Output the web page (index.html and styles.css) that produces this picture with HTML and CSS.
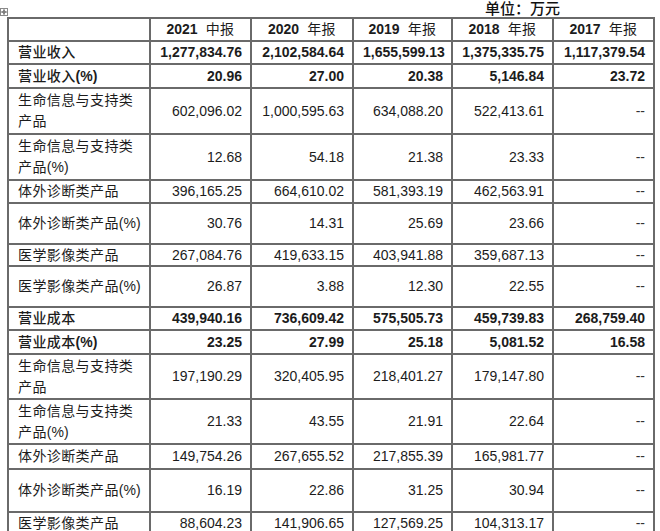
FILE: index.html
```html
<!DOCTYPE html>
<html lang="zh">
<head>
<meta charset="utf-8">
<title>营业收入与营业成本</title>
<link rel="stylesheet" href="styles.css">
</head>
<body>
<div class="page">
  <div class="caption">
    <svg class="handle" width="8" height="8" viewBox="0 0 8 8" aria-hidden="true">
      <rect x="0.5" y="0.5" width="7" height="7" fill="#fff" stroke="#8a8a8a"/>
      <path d="M4 1.5V6.5M1.5 4H6.5" stroke="#555" stroke-width="1"/>
      <path d="M4 1.2L3 2.4H5Z M4 6.8L3 5.6H5Z M1.2 4L2.4 3V5Z M6.8 4L5.6 3V5Z" fill="#555"/>
    </svg>
    <span class="unit">单位：万元</span>
  </div>
  <table class="data">
    <colgroup>
      <col class="c-label"><col class="c-2021"><col class="c-2020"><col class="c-2019"><col class="c-2018"><col class="c-2017">
    </colgroup>
    <thead>
      <tr class="r23 head">
        <th></th>
        <th>2021<span class="cn sp">中报</span></th>
        <th>2020<span class="cn sp">年报</span></th>
        <th>2019<span class="cn sp">年报</span></th>
        <th>2018<span class="cn sp">年报</span></th>
        <th>2017<span class="cn sp">年报</span></th>
      </tr>
    </thead>
    <tbody>
      <tr class="r23 bold">
        <td class="label"><span class="cn">营业收入</span></td>
        <td>1,277,834.76</td><td>2,102,584.64</td><td>1,655,599.13</td><td>1,375,335.75</td><td>1,117,379.54</td>
      </tr>
      <tr class="r24 bold">
        <td class="label"><span class="cn">营业收入</span>(%)</td>
        <td>20.96</td><td>27.00</td><td>20.38</td><td>5,146.84</td><td>23.72</td>
      </tr>
      <tr class="r46">
        <td class="label two"><span class="cn">生命信息与支持类<br>产品</span></td>
        <td>602,096.02</td><td>1,000,595.63</td><td>634,088.20</td><td>522,413.61</td><td class="dash">--</td>
      </tr>
      <tr class="r46">
        <td class="label two"><span class="cn">生命信息与支持类<br>产品</span>(%)</td>
        <td>12.68</td><td>54.18</td><td>21.38</td><td>23.33</td><td class="dash">--</td>
      </tr>
      <tr class="r23">
        <td class="label"><span class="cn">体外诊断类产品</span></td>
        <td>396,165.25</td><td>664,610.02</td><td>581,393.19</td><td>462,563.91</td><td class="dash">--</td>
      </tr>
      <tr class="r41">
        <td class="label"><span class="cn">体外诊断类产品</span>(%)</td>
        <td>30.76</td><td>14.31</td><td>25.69</td><td>23.66</td><td class="dash">--</td>
      </tr>
      <tr class="r22">
        <td class="label"><span class="cn">医学影像类产品</span></td>
        <td>267,084.76</td><td>419,633.15</td><td>403,941.88</td><td>359,687.13</td><td class="dash">--</td>
      </tr>
      <tr class="r41">
        <td class="label"><span class="cn">医学影像类产品</span>(%)</td>
        <td>26.87</td><td>3.88</td><td>12.30</td><td>22.55</td><td class="dash">--</td>
      </tr>
      <tr class="r23 bold">
        <td class="label"><span class="cn">营业成本</span></td>
        <td>439,940.16</td><td>736,609.42</td><td>575,505.73</td><td>459,739.83</td><td>268,759.40</td>
      </tr>
      <tr class="r24 bold">
        <td class="label"><span class="cn">营业成本</span>(%)</td>
        <td>23.25</td><td>27.99</td><td>25.18</td><td>5,081.52</td><td>16.58</td>
      </tr>
      <tr class="r45">
        <td class="label two"><span class="cn">生命信息与支持类<br>产品</span></td>
        <td>197,190.29</td><td>320,405.95</td><td>218,401.27</td><td>179,147.80</td><td class="dash">--</td>
      </tr>
      <tr class="r45">
        <td class="label two"><span class="cn">生命信息与支持类<br>产品</span>(%)</td>
        <td>21.33</td><td>43.55</td><td>21.91</td><td>22.64</td><td class="dash">--</td>
      </tr>
      <tr class="r25">
        <td class="label"><span class="cn">体外诊断类产品</span></td>
        <td>149,754.26</td><td>267,655.52</td><td>217,855.39</td><td>165,981.77</td><td class="dash">--</td>
      </tr>
      <tr class="r43">
        <td class="label"><span class="cn">体外诊断类产品</span>(%)</td>
        <td>16.19</td><td>22.86</td><td>31.25</td><td>30.94</td><td class="dash">--</td>
      </tr>
      <tr class="r23">
        <td class="label"><span class="cn">医学影像类产品</span></td>
        <td>88,604.23</td><td>141,906.65</td><td>127,569.25</td><td>104,313.17</td><td class="dash">--</td>
      </tr>
    </tbody>
  </table>
</div>
</body>
</html>
```

FILE: styles.css
```css
html, body {
  margin: 0;
  padding: 0;
  background: #ffffff;
}

body {
  font-family: "Liberation Sans", Arial, "Noto Sans CJK SC", sans-serif;
  font-size: 14px;
  color: #1c1c1c;
}

.page {
  width: 660px;
  height: 531px;
  overflow: hidden;
}

.caption {
  display: flex;
  justify-content: space-between;
  align-items: flex-start;
  height: 17px;
  width: 654px;
}

.handle {
  align-self: flex-end;
  margin-bottom: 1px;
  display: block;
}

.unit {
  font-family: "Noto Sans CJK SC", sans-serif;
  font-size: 15px;
  font-weight: 500;
  line-height: 15px;
  margin-right: 94px;
  color: #111;
}

.data {
  margin-left: 7px;
  border-collapse: collapse;
  table-layout: fixed;
  width: 646px;
}

.c-label { width: 142px; }
.c-2021 { width: 101px; }
.c-2020 { width: 102px; }
.c-2019 { width: 99px; }
.c-2018 { width: 101px; }
.c-2017 { width: 101px; }

.data th,
.data td {
  border: 2px solid #6a6a6a;
  padding: 0 8px 0 9px;
  vertical-align: middle;
  text-align: right;
  white-space: nowrap;
  line-height: 19px;
}

.data th {
  text-align: center;
  font-weight: 700;
  padding: 0;
}

.data td.label {
  text-align: left;
  font-weight: 400;
}

.data td.two {
  line-height: 21px;
}

.cn {
  font-weight: 400;
  letter-spacing: 0.4px;
}

.sp {
  margin-left: 8px;
}

.bold td {
  font-weight: 700;
}

.bold td.label {
  font-weight: 700;
}

.bold td.label .cn {
  font-weight: 500;
}

.dash {
  color: #333;
}

.r22 { height: 22px; }
.r23 { height: 23px; }
.r24 { height: 24px; }
.r25 { height: 25px; }
.r41 { height: 41px; }
.r43 { height: 43px; }
.r45 { height: 45px; }
.r46 { height: 46px; }
```
